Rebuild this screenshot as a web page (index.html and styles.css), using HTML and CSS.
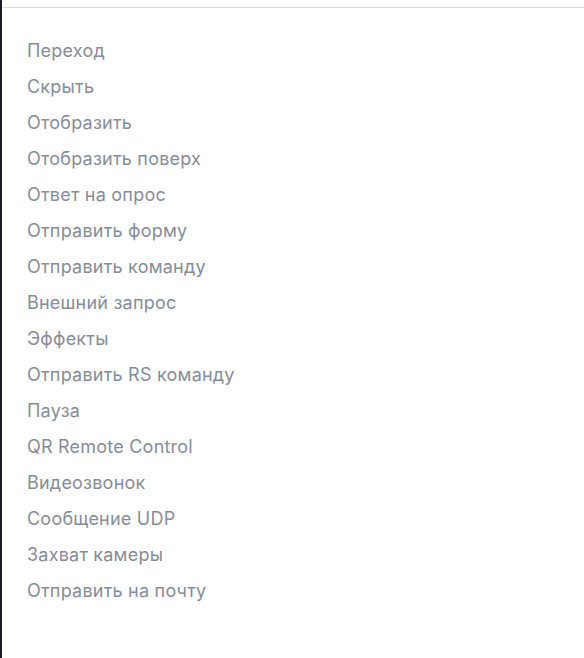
FILE: index.html
```html
<!DOCTYPE html>
<html lang="ru">
<head>
<meta charset="utf-8">
<link rel="stylesheet" href="styles.css">
</head>
<body>
<div class="page">
  <div class="edge"></div>
  <div class="panel">
    <div class="divider"></div>
    <ul class="menu">
      <li>Переход</li>
      <li>Скрыть</li>
      <li>Отобразить</li>
      <li>Отобразить поверх</li>
      <li>Ответ на опрос</li>
      <li>Отправить форму</li>
      <li>Отправить команду</li>
      <li>Внешний запрос</li>
      <li>Эффекты</li>
      <li>Отправить RS команду</li>
      <li>Пауза</li>
      <li>QR Remote Control</li>
      <li>Видеозвонок</li>
      <li>Сообщение UDP</li>
      <li>Захват камеры</li>
      <li>Отправить на почту</li>
    </ul>
  </div>
</div>
</body>
</html>
```
FILE: styles.css
```css
html, body {
  margin: 0;
  padding: 0;
  background: #ffffff;
}
.page {
  display: flex;
  height: 658px;
}
.edge {
  width: 2px;
  flex: none;
  background: #1e1c22;
}
.panel {
  flex: 1;
  padding-top: 7px;
  background: #fff;
}
.divider {
  height: 1px;
  background: #dcdbe1;
  margin-left: 1px;
}
.menu {
  list-style: none;
  margin: 0;
  padding: 25px 0 0 25px;
  font-family: Inter, "Noto Sans", sans-serif;
  font-size: 18px;
  line-height: 36px;
  letter-spacing: 0.22px;
  color: #878c99;
}
.menu li {
  margin: 0;
}
```
